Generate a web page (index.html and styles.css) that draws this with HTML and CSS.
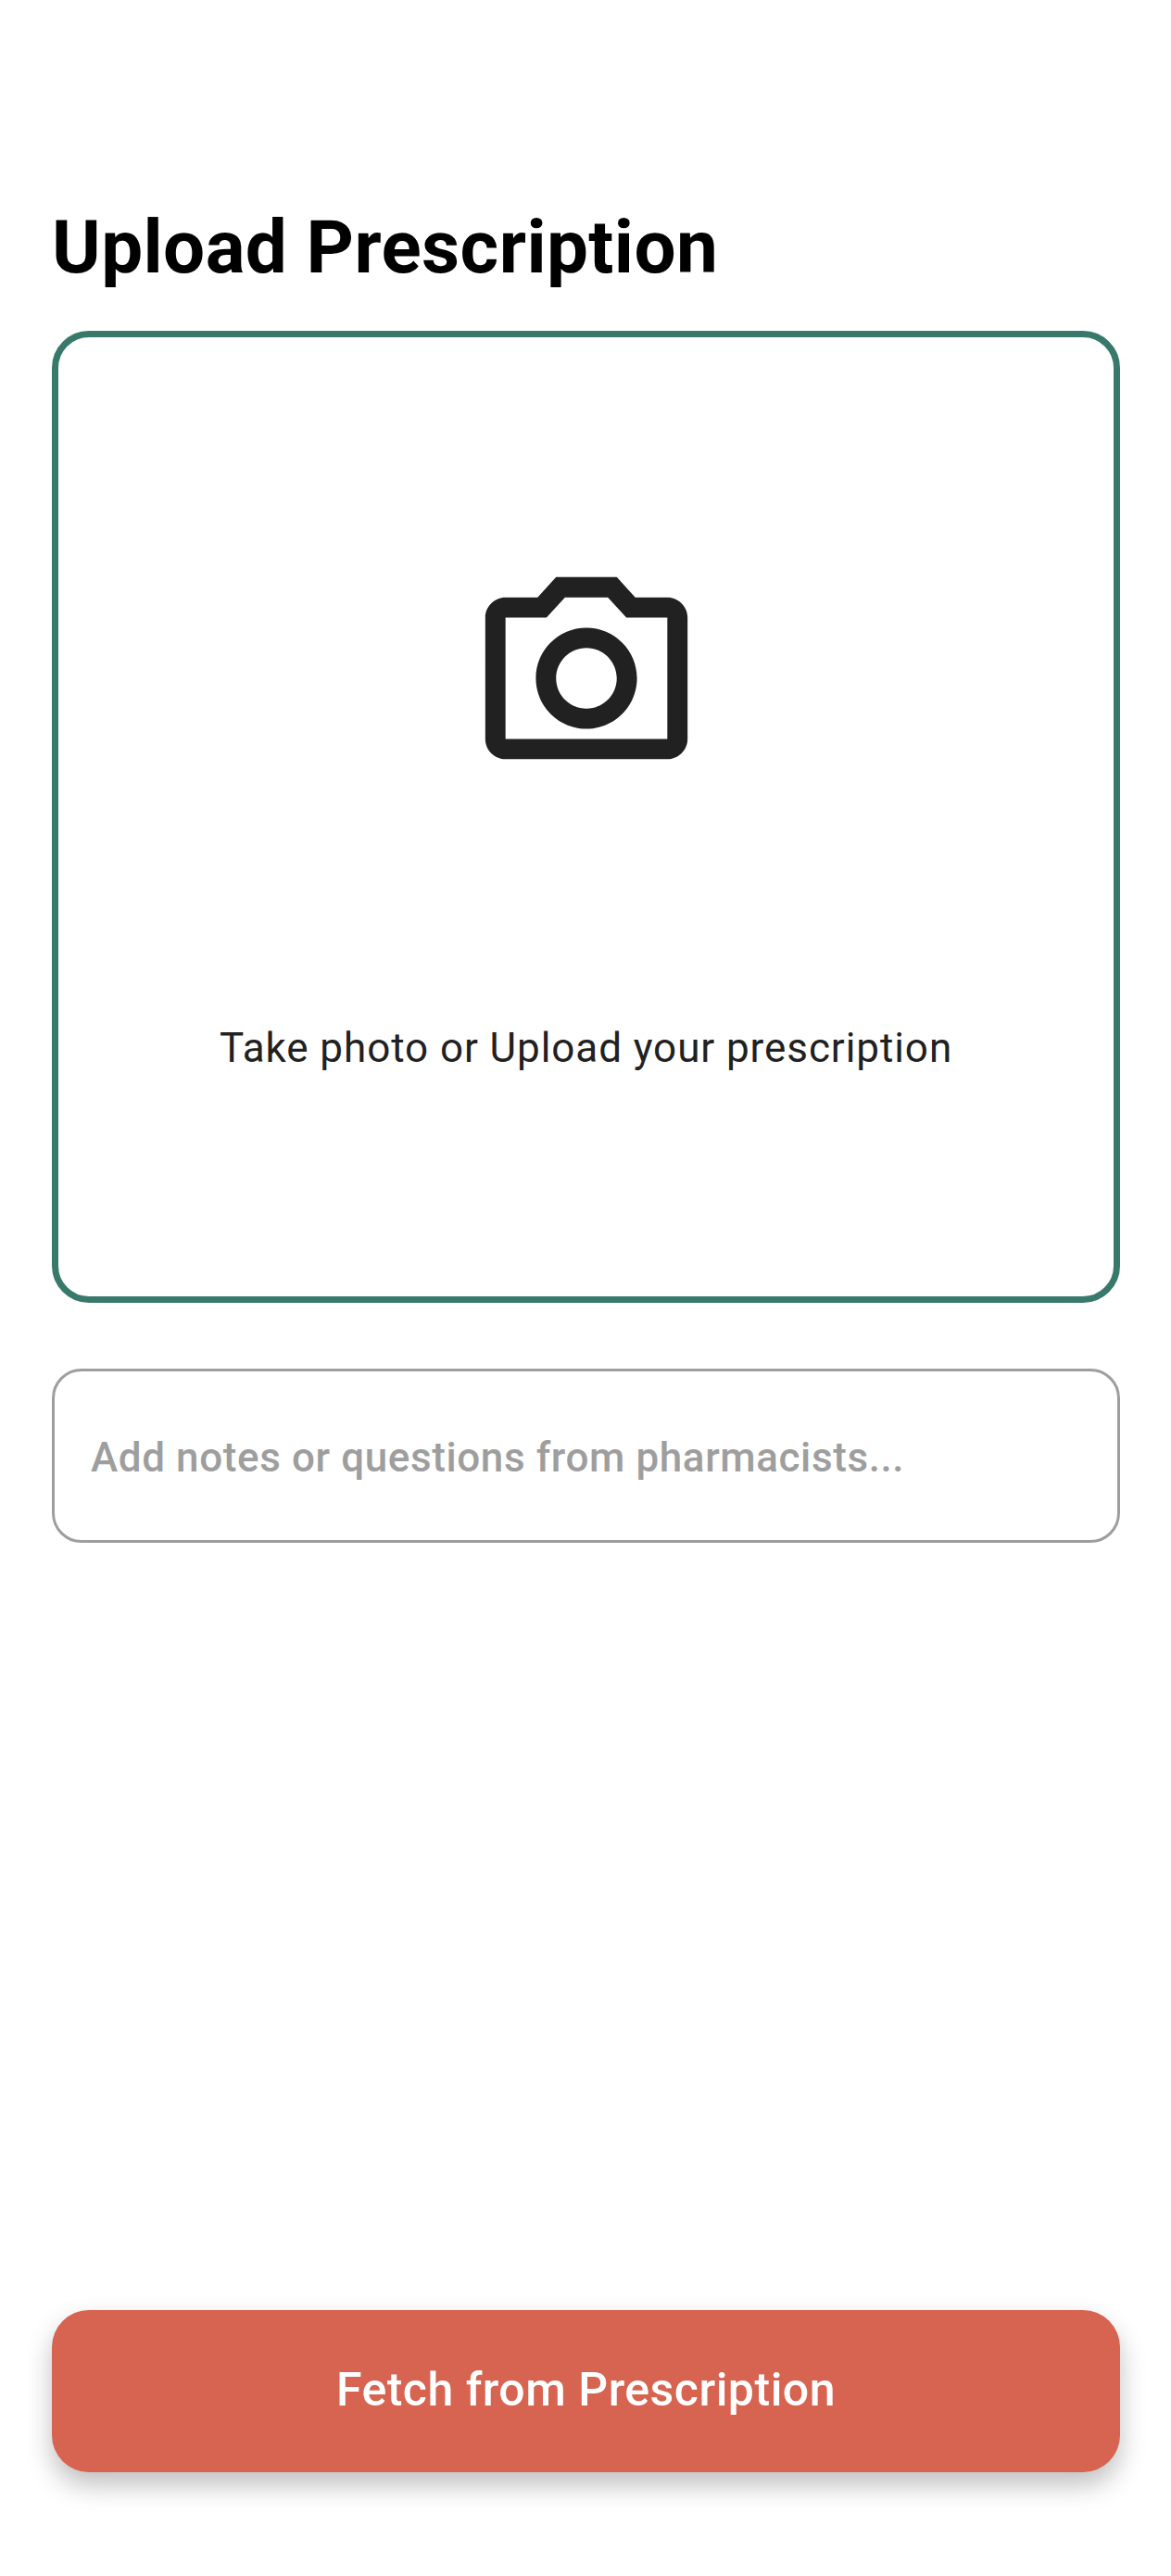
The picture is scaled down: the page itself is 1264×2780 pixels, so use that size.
FILE: index.html
```html
<!DOCTYPE html>
<html lang="en">
<head>
    <meta charset="UTF-8">
    <meta name="viewport" content="width=device-width, initial-scale=1.0">
    <title>Upload Prescription</title>
    <link rel="stylesheet" href="styles.css">
</head>
<body>

<div class="page">
    <h1 class="title">Upload Prescription</h1>

    <div class="upload-box">
        <svg class="camera-icon" viewBox="0 0 24 24" width="262" height="262">
            <path d="M14.12 4l1.83 2H20v12H4V6h4.05l1.83-2h4.24M15 2H9L7.17 4H4c-1.1 0-2 .9-2 2v12c0 1.1.9 2 2 2h16c1.1 0 2-.9 2-2V6c0-1.1-.9-2-2-2h-3.17L15 2zm-3 7c1.65 0 3 1.35 3 3s-1.35 3-3 3-3-1.35-3-3 1.35-3 3-3m0-2c-2.76 0-5 2.24-5 5s2.24 5 5 5 5-2.24 5-5-2.24-5-5-5z"/>
        </svg>
        <p class="upload-text">Take photo or Upload your prescription</p>
    </div>

    <div class="notes-box">Add notes or questions from pharmacists...</div>

    <button type="button" class="fetch-btn">Fetch from Prescription</button>
</div>

</body>
</html>
```

FILE: styles.css
```css
body {
    font-family: Roboto, "Liberation Sans", sans-serif;
    background-color: #fff;
    margin: 0;
    padding: 0;
}

.page {
    display: flex;
    flex-direction: column;
    box-sizing: border-box;
    height: 2780px;
    padding: 220px 55px 112px 56px;
}

.title {
    margin: 0;
    font-size: 80px;
    line-height: 94px;
    font-weight: 700;
    letter-spacing: 0.4px;
    color: #000;
}

.upload-box {
    display: flex;
    flex-direction: column;
    align-items: center;
    box-sizing: border-box;
    height: 1049px;
    margin-top: 43px;
    padding-top: 237px;
    border: 7px solid #38796b;
    border-radius: 40px;
}

.camera-icon {
    display: block;
    fill: #212121;
}

.upload-text {
    margin: 0;
    margin-top: 242px;
    font-size: 44px;
    line-height: 52px;
    letter-spacing: 0.92px;
    color: #212121;
}

.notes-box {
    display: flex;
    align-items: center;
    box-sizing: border-box;
    height: 188px;
    margin-top: 71px;
    padding: 4px 39px 0;
    border: 3px solid #9e9e9e;
    border-radius: 32px;
    font-size: 44px;
    font-weight: 500;
    letter-spacing: 0.6px;
    color: #9e9e9e;
}

.fetch-btn {
    height: 175px;
    margin-top: auto;
    padding-bottom: 4px;
    border: none;
    border-radius: 40px;
    background-color: #d76351;
    box-shadow: 0 14px 28px rgba(0, 0, 0, 0.25);
    color: #fff;
    font-family: inherit;
    font-size: 50px;
    font-weight: 500;
    letter-spacing: 0.5px;
}
```
